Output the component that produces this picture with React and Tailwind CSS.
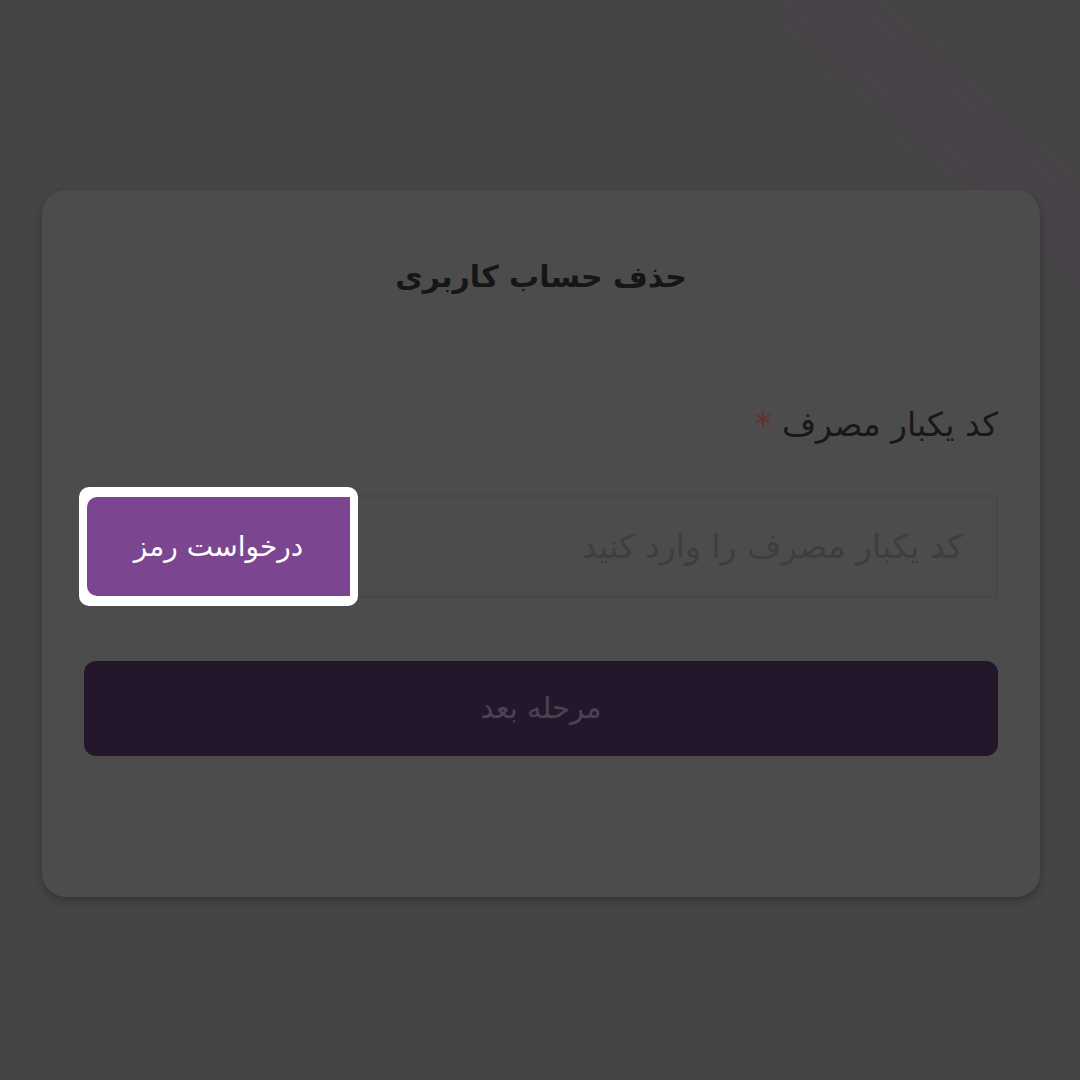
export default function App() {
  const font = { fontFamily: '"DejaVu Sans", "Noto Sans", sans-serif' };

  return (
    <div className="relative min-h-screen w-full overflow-hidden bg-[#454545] pt-[190px] pl-[42px] pr-[40px]" style={font} dir="rtl">
      {/* faint diagonal streak behind the overlay */}
      <div className="absolute left-[830px] top-[-40px] h-[75px] w-[420px] origin-top-left rotate-[42deg] bg-[#494248] blur-[5px]" />

      <div className="relative h-[707px] rounded-[24px] bg-[#4c4c4c] px-[42px] pt-[67px] shadow-[0_4px_8px_rgba(0,0,0,0.25)]">
        <h1 className="text-center text-[30px] font-bold leading-[40px] text-[#161616]">حذف حساب کاربری</h1>

        <label className="mt-[106px] block text-[33px] leading-[44px] text-[#181818]">
          کد یکبار مصرف <span className="text-[#6e2c31]">*</span>
        </label>

        <div className="relative mt-[48px] h-[103px] w-full">
          <input
            className="h-full w-full rounded-[3px] border-2 border-[#474747] bg-transparent pr-[33px] text-[33px] outline-none placeholder:text-[#3e3e3e]"
            placeholder="کد یکبار مصرف را وارد کنید"
          />
          <div className="absolute left-[-5px] top-[-8px] flex h-[119px] w-[279px] items-center justify-center rounded-[10px] bg-white">
            <button className="h-[99px] w-[263px] rounded-l-[10px] bg-[#7b468f] text-[28px] text-white">درخواست رمز</button>
          </div>
        </div>

        <button className="mt-[63px] h-[95px] w-full rounded-[12px] bg-[#24172b] text-[29px] text-[#4d4253]">مرحله بعد</button>
      </div>
    </div>
  );
}
